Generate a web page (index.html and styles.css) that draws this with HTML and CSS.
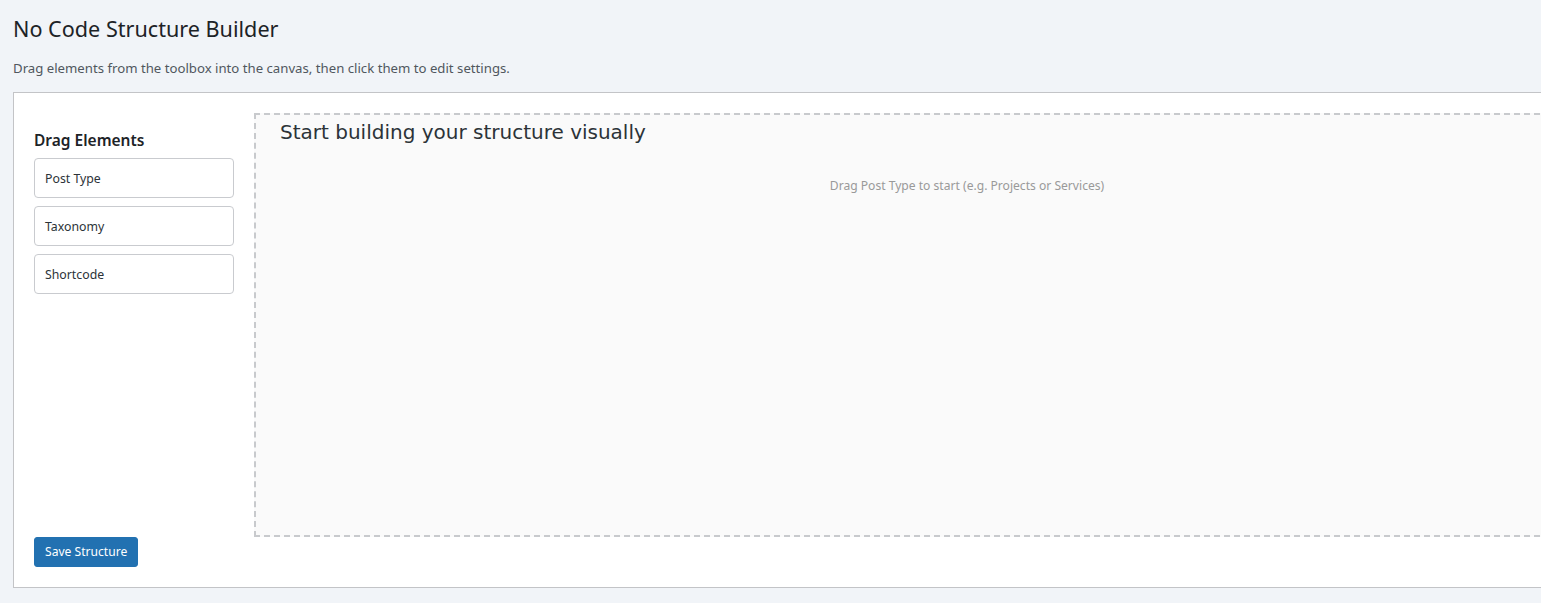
FILE: index.html
```html
<!DOCTYPE html>
<html lang="en">
<head>
<meta charset="utf-8">
<title>No Code Structure Builder</title>
<link rel="stylesheet" href="styles.css">
</head>
<body>
<div class="wrap">
  <h1 class="page-title">No Code Structure Builder</h1>
  <p class="page-desc">Drag elements from the toolbox into the canvas, then click them to edit settings.</p>
  <div class="builder">
    <div class="builder-row">
      <aside class="toolbox">
        <h3 class="toolbox-title">Drag Elements</h3>
        <div class="tool-item">Post Type</div>
        <div class="tool-item">Taxonomy</div>
        <div class="tool-item">Shortcode</div>
      </aside>
      <section class="canvas">
        <h3 class="canvas-title">Start building your structure visually</h3>
        <p class="canvas-hint">Drag Post Type to start (e.g. Projects or Services)</p>
      </section>
    </div>
    <button class="save-btn" type="button">Save Structure</button>
  </div>
</div>
</body>
</html>
```
FILE: styles.css
```css
html { overflow-x: hidden; }
body {
  margin: 0;
  background: #f1f4f8;
  font-family: "Noto Sans", "Open Sans", sans-serif;
  color: #3c434a;
  font-size: 13px;
}
.wrap {
  padding: 0 0 0 13px;
  width: 1688px;
}
.page-title {
  margin: 0;
  padding: 14px 0 0;
  font-size: 21.6px;
  font-weight: 400;
  line-height: 30px;
  color: #1d2327;
}
.page-desc {
  margin: 15px 0 15px;
  font-size: 13.2px;
  line-height: 18px;
  color: #50575e;
}
.builder {
  background: #fff;
  border: 1px solid #c3c4c7;
  padding: 20px;
}
.builder-row {
  display: flex;
  gap: 20px;
  align-items: flex-start;
}
.toolbox {
  width: 200px;
  flex: none;
  display: flex;
  flex-direction: column;
  gap: 8px;
}
.toolbox-title {
  margin: 0;
  padding-top: 17px;
  font-size: 15.5px;
  line-height: 20px;
  font-weight: 600;
  color: #1d2327;
}
.tool-item {
  height: 40px;
  box-sizing: border-box;
  border: 1px solid #c9cbcf;
  border-radius: 4px;
  background: #fff;
  padding: 0 10px;
  display: flex;
  align-items: center;
  font-size: 12.3px;
  color: #2c3338;
}
.canvas {
  flex: 1;
  box-sizing: border-box;
  min-height: 424px;
  border: 2px dashed #c8cacd;
  background: #fafafa;
  padding: 4px 24px;
}
.canvas-title {
  margin: 0;
  font-family: "DejaVu Sans", sans-serif;
  font-size: 20px;
  font-weight: 400;
  line-height: 26px;
  color: #2c3338;
}
.canvas-hint {
  margin: 32px 0 0;
  text-align: center;
  font-size: 12.1px;
  line-height: 18px;
  color: #999;
}
.save-btn {
  display: block;
  margin: 0;
  height: 30px;
  padding: 0 10px;
  background: #2271b1;
  border: 1px solid #2271b1;
  border-radius: 3px;
  color: #fff;
  font-family: "Noto Sans", "Open Sans", sans-serif;
  font-size: 12.1px;
  line-height: 28px;
  cursor: pointer;
}
```
